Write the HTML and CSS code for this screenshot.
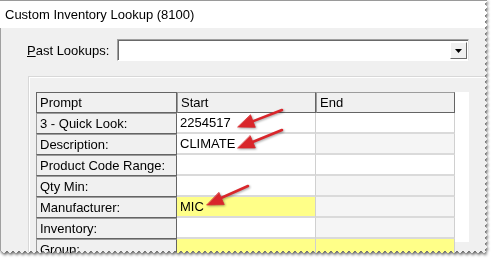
FILE: index.html
```html
<!DOCTYPE html>
<html lang="en">
<head>
    <meta charset="UTF-8">
    <meta name="viewport" content="width=device-width, initial-scale=1.0">
    <title>Custom Inventory Lookup</title>
    <link rel="stylesheet" href="styles.css">
</head>
<body>
  <div class="shot">
    <div class="paper">
      <div class="tear-right">
        <div class="window">
          <div class="titlebar">Custom Inventory Lookup (8100)</div>
          <div class="dialog">
            <div class="lookup-row">
              <label class="lookup-label" for="past-lookups"><u>P</u>ast Lookups:</label>
              <div class="combo" id="past-lookups">
                <span class="combo-btn">
                  <svg width="7" height="4" viewBox="0 0 7 4"><path d="M0 0h7L3.5 4z" fill="#000"/></svg>
                </span>
              </div>
            </div>
            <div class="group">
              <div class="grid">
                <div class="criteria">
                  <div class="cell fixed">Prompt</div>
                  <div class="cell fixed">Start</div>
                  <div class="cell fixed">End</div>

                  <div class="cell fixed">3 - Quick Look:</div>
                  <div class="cell">2254517</div>
                  <div class="cell end">&nbsp;</div>

                  <div class="cell fixed">Description:</div>
                  <div class="cell">CLIMATE</div>
                  <div class="cell end off">&nbsp;</div>

                  <div class="cell fixed">Product Code Range:</div>
                  <div class="cell">&nbsp;</div>
                  <div class="cell end">&nbsp;</div>

                  <div class="cell fixed">Qty Min:</div>
                  <div class="cell">&nbsp;</div>
                  <div class="cell end off">&nbsp;</div>

                  <div class="cell fixed">Manufacturer:</div>
                  <div class="cell req">MIC</div>
                  <div class="cell end off">&nbsp;</div>

                  <div class="cell fixed">Inventory:</div>
                  <div class="cell">&nbsp;</div>
                  <div class="cell end off">&nbsp;</div>

                  <div class="cell fixed">Group:</div>
                  <div class="cell req">&nbsp;</div>
                  <div class="cell end req">&nbsp;</div>
                </div>
              </div>
            </div>
          </div>
        </div>
      </div>
    </div>

    <!-- callout arrows drawn over the screenshot -->
    <svg class="arrows" width="497" height="261" viewBox="0 0 497 261">
      <g stroke="#d9262b" stroke-width="2.6" stroke-linecap="round" fill="#d9262b">
        <line x1="282" y1="110" x2="252" y2="121.6"/>
        <polygon points="238,127 255.3,127.3 250.6,115.1" stroke-width="0.8"/>
        <line x1="282" y1="130" x2="252" y2="142.2"/>
        <polygon points="238,148 255.3,147.9 250.3,135.9" stroke-width="0.8"/>
        <line x1="248" y1="186" x2="221" y2="198"/>
        <polygon points="207,205 224.2,204.6 219,192.7" stroke-width="0.8"/>
      </g>
    </svg>
  </div>
</body>
</html>
```

FILE: styles.css
```css
body {
  margin: 0;
  background: #fff;
  font-family: "Liberation Sans", Arial, sans-serif;
  font-size: 13px;
  color: #000;
}

.shot {
  position: relative;
  width: 497px;
  height: 261px;
  overflow: hidden;
}

/* torn screenshot edges */
.paper {
  filter: drop-shadow(1px 2px 1.5px rgba(0, 0, 0, 0.6));
}

.tear-right {
  width: 488px;
  -webkit-mask:
    linear-gradient(#000 0 0) left / calc(100% - 5px) 100% no-repeat,
    conic-gradient(from -135deg at right, #0000, #000 1deg 89deg, #0000 90deg) right / 5px 6px repeat-y;
  mask:
    linear-gradient(#000 0 0) left / calc(100% - 5px) 100% no-repeat,
    conic-gradient(from -135deg at right, #0000, #000 1deg 89deg, #0000 90deg) right / 5px 6px repeat-y;
}

.window {
  height: 254px;
  background: #f0f0f0;
  border-top: 1px solid #9a9a9a;
  box-sizing: border-box;
  -webkit-mask:
    linear-gradient(#000 0 0) top / 100% calc(100% - 5px) no-repeat,
    conic-gradient(from -45deg at bottom, #0000, #000 1deg 89deg, #0000 90deg) bottom / 6px 5px repeat-x;
  mask:
    linear-gradient(#000 0 0) top / 100% calc(100% - 5px) no-repeat,
    conic-gradient(from -45deg at bottom, #0000, #000 1deg 89deg, #0000 90deg) bottom / 6px 5px repeat-x;
}

.titlebar {
  height: 27px;
  line-height: 27px;
  padding-left: 5px;
  background: #fff;
  color: #000;
}

.dialog {
  height: 226px;
  border-left: 1px solid #a0a0a0;
  padding-top: 11px;
  box-sizing: border-box;
}

.lookup-row {
  display: flex;
  align-items: center;
  padding-left: 26px;
}

.lookup-label {
  width: 90px;
}

.combo {
  width: 352px;
  height: 22px;
  box-sizing: border-box;
  background: #fff;
  border-top: 1px solid #a0a0a0;
  border-left: 1px solid #a0a0a0;
  border-right: 1px solid #e3e3e3;
  border-bottom: 1px solid #fff;
  box-shadow: inset 1px 1px 0 #696969;
  display: flex;
  justify-content: flex-end;
  padding: 2px 1px 1px 2px;
}

.combo-btn {
  width: 17px;
  height: 17px;
  box-sizing: border-box;
  background: #f0f0f0;
  border-top: 1px solid #fff;
  border-left: 1px solid #fff;
  border-right: 1px solid #696969;
  border-bottom: 1px solid #696969;
  display: flex;
  align-items: center;
  justify-content: center;
}

.group {
  margin: 15px 0 0 27px;
  height: 160px;
  border-top: 1px solid #d8d8d8;
  border-left: 1px solid #d8d8d8;
  box-shadow: inset 1px 1px 0 #fff;
  padding: 15px 0 0 7px;
}

.grid {
  width: 433px;
  height: 150px;
  background: #fff;
}

.criteria {
  display: grid;
  grid-template-columns: 141px 139px 139px;
  grid-auto-rows: 21px;
}

.cell {
  box-sizing: border-box;
  padding-left: 3px;
  line-height: 20px;
  white-space: nowrap;
  background: #fff;
  border-right: 1px solid #d0d0d0;
  border-bottom: 2px solid #dadada;
}

.cell.fixed {
  background: #f0f0f0;
  border-top: 1px solid #9c9c9c;
  border-left: 1px solid #9c9c9c;
  border-right: 1px solid #646464;
  border-bottom: 1px solid #646464;
  line-height: 20px;
  padding-left: 3px;
}

.criteria > .cell.fixed:first-child {
  border-left-color: #646464;
  border-top-color: #646464;
}

.cell.end {
  background: #fff;
}

.cell.off {
  background: #f5f5f5;
}

.cell.req {
  background: #ffff88;
}

.arrows {
  position: absolute;
  top: 0;
  left: 0;
  filter: drop-shadow(1px 1px 1px rgba(0, 0, 0, 0.35));
}
```
